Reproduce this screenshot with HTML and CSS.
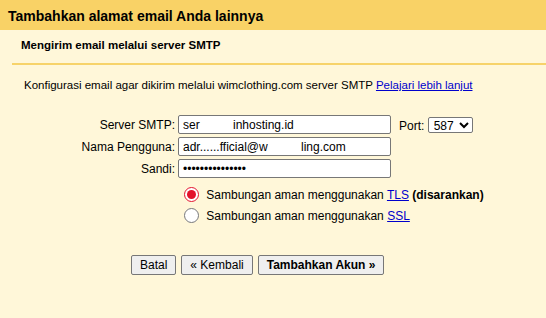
FILE: index.html
```html
<!DOCTYPE html>
<html lang="id">
<head>
    <meta charset="UTF-8">
    <title>Tambahkan alamat email Anda lainnya</title>
    <link rel="stylesheet" href="styles.css">
</head>
<body>
    <div class="dialog">
        <h1 class="dialog-title">Tambahkan alamat email Anda lainnya</h1>
        <div class="dialog-body">
            <h2 class="step-title">Mengirim email melalui server SMTP</h2>
            <p class="intro">Konfigurasi email agar dikirim melalui wimclothing.com server SMTP <a href="#">Pelajari lebih lanjut</a></p>

            <table class="form">
                <tr>
                    <td class="label">Server SMTP:</td>
                    <td><input type="text" class="field" value="ser          inhosting.id"></td>
                    <td class="port">Port: <select class="port-select"><option>587</option></select></td>
                </tr>
                <tr>
                    <td class="label">Nama Pengguna:</td>
                    <td><input type="text" class="field" value="adr......fficial@w          ling.com"></td>
                    <td></td>
                </tr>
                <tr>
                    <td class="label">Sandi:</td>
                    <td><input type="password" class="field" value="passwordpasswor"></td>
                    <td></td>
                </tr>
            </table>

            <div class="options">
                <label class="option"><input type="radio" name="secure" checked> Sambungan aman menggunakan <a href="#">TLS</a> <b>(disarankan)</b></label>
                <label class="option"><input type="radio" name="secure"> Sambungan aman menggunakan <a href="#">SSL</a></label>
            </div>

            <div class="actions">
                <button class="btn">Batal</button>
                <button class="btn">« Kembali</button>
                <button class="btn primary">Tambahkan Akun »</button>
            </div>
        </div>
    </div>
</body>
</html>
```

FILE: styles.css
```css
body {
    margin: 0;
    font-family: Arial, "Liberation Sans", sans-serif;
    font-size: 12px;
    color: #000;
    background: #fff7d9;
}
.dialog-title {
    margin: 0;
    height: 30px;
    line-height: 32px;
    padding-left: 8px;
    background: #f9d266;
    font-size: 14px;
    font-weight: bold;
}
.dialog-body {
    padding: 0 0 0 12px;
}
.step-title {
    margin: 0;
    padding: 9px 0 0 9px;
    height: 24px;
    font-size: 11.5px;
    font-weight: bold;
    border-bottom: 2px solid #f7d36a;
}
.intro {
    margin: 14px 0 0 12px;
    font-size: 11.5px;
}
a {
    color: #0000cc;
}
.form {
    margin: 24px 0 0 0;
    border-collapse: collapse;
}
.form td {
    padding: 0 0 3px 0;
}
.form .label {
    width: 163px;
    text-align: right;
    padding-right: 3px;
}
.field {
    width: 213px;
    height: 19px;
    box-sizing: border-box;
    margin: 0;
    padding: 1px 4px;
    border: 1px solid #777;
    border-radius: 2px;
    font: 12px Arial, "Liberation Sans", sans-serif;
    background: #fff;
}
.port {
    padding-left: 8px !important;
}
.port-select {
    font: 12px Arial, "Liberation Sans", sans-serif;
    height: 16px;
    padding: 0 1px;
    border: 1px solid #777;
    border-radius: 2px;
    background: #fff;
}
.options {
    margin: 6px 0 0 168px;
    display: flex;
    flex-direction: column;
    gap: 6px;
}
.option input {
    margin: 0 4px 0 4px;
    width: 15px;
    height: 15px;
    vertical-align: -3px;
    accent-color: #e3122a;
}
.actions {
    margin: 32px 0 0 119px;
    display: flex;
    gap: 5px;
}
.btn {
    font: 12px Arial, "Liberation Sans", sans-serif;
    padding: 1px 8px;
    height: 20px;
    border: 1px solid #777;
    border-radius: 2px;
    background: #efefef;
}
.btn.primary {
    font-weight: bold;
}
```
